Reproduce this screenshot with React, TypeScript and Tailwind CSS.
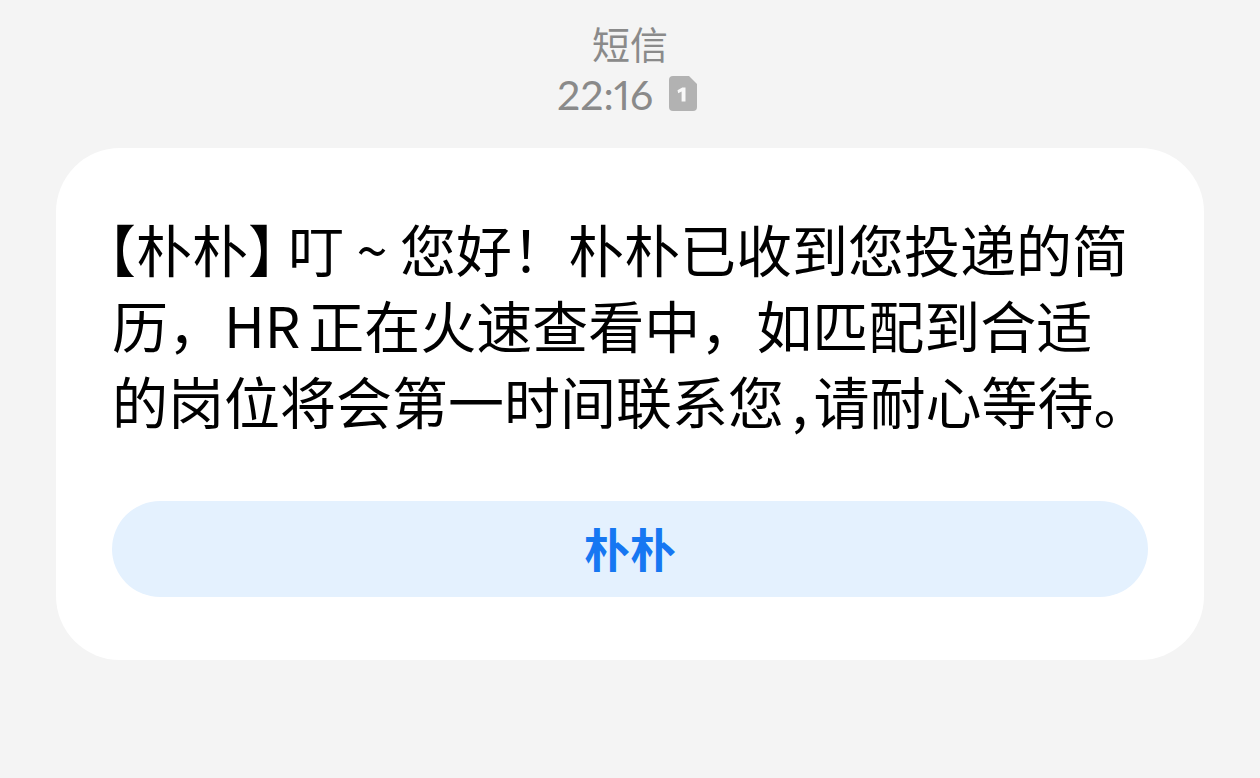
export default function App() {
  return (
    <main
      lang="zh-CN"
      className="min-h-screen bg-[#f4f4f4] px-14 pt-[18px] pb-10 font-['Noto_Sans_CJK_SC',sans-serif]"
    >
      <header className="flex flex-col items-center text-[38px] leading-[50px] text-[#8a8a8a]">
        <h1>短信</h1>
        <div className="flex items-center gap-4 pr-1.5">
          <time className="font-['Lato',sans-serif] text-[41px] leading-[54px] proportional-nums">22:16</time>
          <svg viewBox="0 0 28 35" className="mb-1 h-[35px] w-7" role="img" aria-label="SIM 1">
            <path d="M4 0h16l8 8v23a4 4 0 0 1-4 4H4a4 4 0 0 1-4-4V4a4 4 0 0 1 4-4Z" fill="#b2b2b2" />
            <path d="M8.500 14.200L13.300 11.500H16.500v14h-3.900V15.600l-3.400 1.700Z" fill="#f8f8f8" />
          </svg>
        </div>
      </header>
      <article className="mt-[26px] rounded-[64px] bg-white px-14 pt-[62px] pb-[63px]">
        <p className="text-[56px] leading-[76px] text-black">
          <span className="block whitespace-nowrap">
            <span className="-ml-1 [font-feature-settings:'halt']">【</span>朴朴
            <span className="mr-3 [font-feature-settings:'halt']">】</span>叮
            <span className="inline-block w-14 text-center">~</span>您好！朴朴已收到您投递的简
          </span>
          <span className="block whitespace-nowrap">
            历，<span className="mr-2">HR</span>正在火速查看中，如匹配到合适
          </span>
          <span className="block whitespace-nowrap">
            的岗位将会第一时间联系您<span className="ml-2 mr-1.5">,</span>请耐心等待。
          </span>
        </p>
        <button
          type="button"
          className="mt-[63px] flex h-24 w-full items-center justify-center rounded-full bg-[#e4f1fe] pb-1 text-[46px] leading-none font-bold text-[#1677f2]"
        >
          朴朴
        </button>
      </article>
    </main>
  );
}
